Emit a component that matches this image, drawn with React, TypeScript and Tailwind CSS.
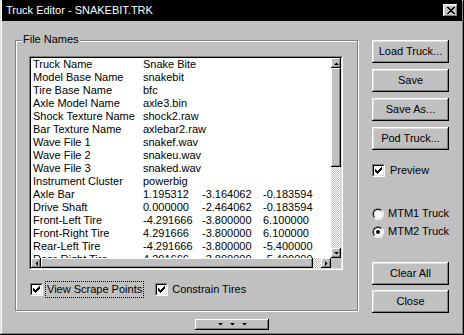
import type { ReactNode } from "react";

const raised =
  "shadow-[inset_-1px_-1px_#000,inset_1px_1px_#fff,inset_-2px_-2px_#808080,inset_2px_2px_#dfdfdf]";
const raisedSmall = "shadow-[inset_-1px_-1px_#000,inset_1px_1px_#fff,inset_-2px_-2px_#808080]";
const dither =
  "bg-[image:repeating-conic-gradient(#c0c0c0_0%_25%,#ffffff_0%_50%)] bg-[length:2px_2px]";

const rows: string[][] = [
  ["Truck Name", "Snake Bite"],
  ["Model Base Name", "snakebit"],
  ["Tire Base Name", "bfc"],
  ["Axle Model Name", "axle3.bin"],
  ["Shock Texture Name", "shock2.raw"],
  ["Bar Texture Name", "axlebar2.raw"],
  ["Wave File 1", "snakef.wav"],
  ["Wave File 2", "snakeu.wav"],
  ["Wave File 3", "snaked.wav"],
  ["Instrument Cluster", "powerbig"],
  ["Axle Bar", "1.195312", "-3.164062", "-0.183594"],
  ["Drive Shaft", "0.000000", "-2.464062", "-0.183594"],
  ["Front-Left Tire", "-4.291666", "-3.800000", "6.100000"],
  ["Front-Right Tire", "4.291666", "-3.800000", "6.100000"],
  ["Rear-Left Tire", "-4.291666", "-3.800000", "-5.400000"],
  ["Rear-Right Tire", "4.291666", "-3.800000", "-5.400000"],
];

function Arrow({ dir }: { dir: "up" | "down" | "left" | "right" }) {
  const pts = {
    up: "0,3 5,3 2.5,0.5",
    down: "0,0 5,0 2.5,2.5",
    left: "3,0 3,5 0.5,2.5",
    right: "0,0 0,5 2.5,2.5",
  }[dir];
  const vertical = dir === "up" || dir === "down";
  return (
    <svg width={vertical ? 5 : 3} height={vertical ? 3 : 5} viewBox={vertical ? "0 0 5 3" : "0 0 3 5"}>
      <polygon points={pts} fill="#000" />
    </svg>
  );
}

function ScrollBtn({ dir }: { dir: "up" | "down" | "left" | "right" }) {
  return (
    <div className={`flex h-[10px] w-[10px] shrink-0 items-center justify-center bg-[#c0c0c0] ${raisedSmall}`}>
      <Arrow dir={dir} />
    </div>
  );
}

function CheckMark() {
  return (
    <svg width="7" height="7" viewBox="0 0 7 7" shapeRendering="crispEdges">
      <path d="M6 0h1v3h-1zM5 1h1v3h-1zM4 2h1v3h-1zM3 3h1v3h-1zM2 4h1v3h-1zM1 3h1v3h-1zM0 2h1v3h-1z" fill="#000" />
    </svg>
  );
}

function Checkbox({ checked }: { checked: boolean }) {
  return (
    <div className="h-[13px] w-[13px] shrink-0 border border-t-[#808080] border-l-[#808080] border-b-white border-r-white">
      <div className="flex h-full w-full items-center justify-center border border-t-black border-l-black border-b-[#dfdfdf] border-r-[#dfdfdf] bg-white">
        {checked ? <CheckMark /> : null}
      </div>
    </div>
  );
}

function Radio({ checked }: { checked: boolean }) {
  return (
    <div className="h-[12px] w-[12px] shrink-0 rounded-full border border-t-[#808080] border-l-[#808080] border-b-white border-r-white">
      <div className="flex h-full w-full items-center justify-center rounded-full border border-t-black border-l-black border-b-[#dfdfdf] border-r-[#dfdfdf] bg-white">
        {checked ? <div className="h-[4px] w-[4px] rounded-full bg-black" /> : null}
      </div>
    </div>
  );
}

function Button({ children, className = "" }: { children: ReactNode; className?: string }) {
  return (
    <div className={`flex h-[23px] w-[77px] items-center justify-center whitespace-nowrap bg-[#c0c0c0] leading-[13px] ${raised} ${className}`}>
      {children}
    </div>
  );
}

function ListBox() {
  return (
    <div className="h-[214px] w-[314px] border border-t-[#808080] border-l-[#808080] border-b-white border-r-white">
      <div className="flex h-full w-full flex-col border border-t-black border-l-black border-b-[#dfdfdf] border-r-[#dfdfdf] bg-white">
        <div className="flex min-h-0 flex-1">
          <div className="min-w-0 flex-1 overflow-hidden pl-[2px]">
            {rows.map((r) => (
              <div key={r[0]} className="flex h-[13px] whitespace-nowrap leading-[13px]">
                <span className="w-[110px] shrink-0">{r[0]}</span>
                <span className="w-[59px] shrink-0">{r[1]}</span>
                {r[2] ? <span className="w-[61px] shrink-0">{r[2]}</span> : null}
                {r[3] ? <span className="shrink-0">{r[3]}</span> : null}
              </div>
            ))}
          </div>
          <div className="flex w-[10px] shrink-0 flex-col">
            <ScrollBtn dir="up" />
            <div className={`h-[99px] w-[10px] shrink-0 bg-[#c0c0c0] ${raisedSmall}`} />
            <div className={`flex-1 ${dither}`} />
            <ScrollBtn dir="down" />
          </div>
        </div>
        <div className="flex h-[10px] shrink-0">
          <ScrollBtn dir="left" />
          <div className={`h-[10px] flex-1 bg-[#c0c0c0] ${raisedSmall}`} />
          <div className={`h-[10px] w-[8px] ${dither}`} />
          <ScrollBtn dir="right" />
          <div className="h-[10px] w-[10px] bg-[#c0c0c0]" />
        </div>
      </div>
    </div>
  );
}

export default function App() {
  return (
    <div
      className={`flex h-[335px] w-[464px] flex-col overflow-hidden bg-[#c0c0c0] px-[2px] font-['Liberation_Sans',Arial,sans-serif] text-[11px] text-black shadow-[inset_-1px_-1px_#000,inset_1px_1px_#dfdfdf,inset_-2px_-2px_#808080,inset_2px_2px_#fff]`}
    >
      {/* title bar */}
      <div className="flex h-[21px] shrink-0 items-center bg-black pl-[4px] pr-[4px] text-white">
        <span className="leading-[13px]">Truck Editor - SNAKEBIT.TRK</span>
        <div className={`ml-auto flex h-[13px] w-[15px] items-center justify-center bg-[#c0c0c0] ${raised}`}>
          <svg width="8" height="7" viewBox="0 0 8 7" shapeRendering="crispEdges">
            <path d="M0 0h2l2 2.5L6 0h2L5 3.5 8 7H6L4 4.5 2 7H0l3-3.5z" fill="#000" />
          </svg>
        </div>
      </div>

      <div className="flex shrink-0 pt-[19px]">
        {/* File Names group */}
        <div className="relative ml-[13px] h-[271px] w-[343px] border border-[#808080] shadow-[1px_1px_0_#fff,inset_1px_1px_0_#fff]">
          <span className="absolute left-[6px] top-[-8px] bg-[#c0c0c0] px-[1px] leading-[13px]">File Names</span>
          <div className="pl-[13px] pt-[15px]">
            <ListBox />
            <div className="mt-[11px] flex h-[17px] items-center pl-[1px]">
              <Checkbox checked />
              <span className="ml-[2px] whitespace-nowrap border border-dotted border-black px-[1px] leading-[15px]">
                View Scrape Points
              </span>
              <div className="ml-[11px]">
                <Checkbox checked />
              </div>
              <span className="ml-[4px] whitespace-nowrap leading-[15px]">Constrain Tires</span>
            </div>
          </div>
        </div>

        {/* right column */}
        <div className="ml-[14px] flex w-[77px] flex-col">
          <div className="flex flex-col gap-[6px]">
            <Button>Load Truck...</Button>
            <Button>Save</Button>
            <Button>Save As...</Button>
            <Button>Pod Truck...</Button>
          </div>
          <div className="mt-[14px] flex h-[13px] items-center">
            <Checkbox checked />
            <span className="ml-[5px] whitespace-nowrap leading-[13px]">Preview</span>
          </div>
          <div className="mt-[30px] flex h-[13px] items-center">
            <Radio checked={false} />
            <span className="ml-[4px] whitespace-nowrap leading-[13px]">MTM1 Truck</span>
          </div>
          <div className="mt-[5px] flex h-[13px] items-center">
            <Radio checked />
            <span className="ml-[4px] whitespace-nowrap leading-[13px]">MTM2 Truck</span>
          </div>
          <div className="mt-[24px] flex flex-col gap-[5px]">
            <Button>Clear All</Button>
            <Button>Close</Button>
          </div>
        </div>
      </div>

      <div className="mt-[6px] flex justify-center">
        <div className={`flex h-[11px] w-[74px] items-center justify-center gap-[7px] bg-[#c0c0c0] ${raisedSmall}`}>
          <Arrow dir="down" />
          <Arrow dir="down" />
          <Arrow dir="down" />
        </div>
      </div>
    </div>
  );
}
